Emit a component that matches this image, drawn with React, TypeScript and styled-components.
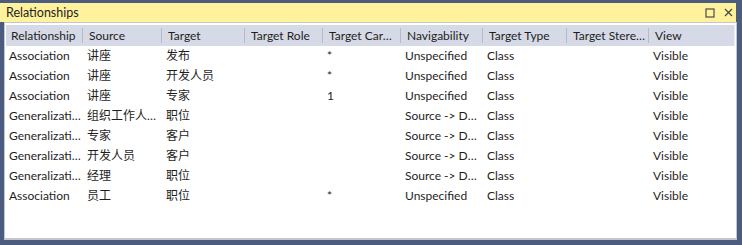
import styled, { createGlobalStyle } from "styled-components";

const GlobalStyle = createGlobalStyle`
  html, body {
    margin: 0;
    padding: 0;
    background: #4b5c7f;
  }
  body {
    font-family: Lato, "Noto Sans CJK SC", sans-serif;
    font-size: 12px;
    color: #1e1e1e;
  }
`;

const COLS = "77px 79px 83px 78px 78px 82px 84px 82px 1fr";

const headers = [
  "Relationship",
  "Source",
  "Target",
  "Target Role",
  "Target Cardinality",
  "Navigability",
  "Target Type",
  "Target Stereotype",
  "View",
];

const rows: string[][] = [
  ["Association", "讲座", "发布", "", "*", "Unspecified", "Class", "", "Visible"],
  ["Association", "讲座", "开发人员", "", "*", "Unspecified", "Class", "", "Visible"],
  ["Association", "讲座", "专家", "", "1", "Unspecified", "Class", "", "Visible"],
  ["Generalization", "组织工作人员", "职位", "", "", "Source -> Destination", "Class", "", "Visible"],
  ["Generalization", "专家", "客户", "", "", "Source -> Destination", "Class", "", "Visible"],
  ["Generalization", "开发人员", "客户", "", "", "Source -> Destination", "Class", "", "Visible"],
  ["Generalization", "经理", "职位", "", "", "Source -> Destination", "Class", "", "Visible"],
  ["Association", "员工", "职位", "", "*", "Unspecified", "Class", "", "Visible"],
];

const App = () => {
  return (
    <>
      <GlobalStyle />
      <Window>
        <TitleBar>
          <Title>Relationships</Title>
          <TitleButtons>
            <svg width="10" height="10" viewBox="0 0 10 10">
              <rect x="1" y="1" width="8" height="8" fill="none" stroke="#4a4a4a" strokeWidth="1.2" />
            </svg>
            <svg width="9" height="9" viewBox="0 0 9 9">
              <path d="M1 1 L8 8 M8 1 L1 8" stroke="#4a4a4a" strokeWidth="1.3" />
            </svg>
          </TitleButtons>
        </TitleBar>
        <Panel>
          <HeaderRow>
            {headers.map((h) => (
              <HeadCell key={h}>{h}</HeadCell>
            ))}
          </HeaderRow>
          {rows.map((r, i) => (
            <Row key={i}>
              {r.map((c, j) => (
                <Cell key={j}>{c}</Cell>
              ))}
            </Row>
          ))}
        </Panel>
      </Window>
    </>
  );
};

const Window = styled.div`
  width: 742px;
  height: 245px;
  box-sizing: border-box;
  padding-top: 3px;
  display: flex;
  flex-direction: column;
`;

const TitleBar = styled.div`
  height: 19px;
  margin-right: 6px;
  background: #fff29d;
  display: flex;
  align-items: center;
  justify-content: space-between;
  padding: 0 6px;
`;

const Title = styled.span`
  font-size: 12.5px;
  line-height: 19px;
  color: #1e1e1e;
`;

const TitleButtons = styled.div`
  display: flex;
  align-items: center;
  gap: 9px;
  margin-right: -3px;

  svg {
    display: block;
  }
`;

const Panel = styled.div`
  height: 218px;
  margin: 0 5px 0 4px;
  border: 1px solid #c3c6cc;
  border-bottom-width: 2px;
  background: #fff;
  padding: 2px 1px 0 1px;
  box-sizing: border-box;
`;

const Row = styled.div`
  display: grid;
  grid-template-columns: ${COLS};
  height: 20px;
  align-items: center;
`;

const HeaderRow = styled(Row)`
  height: 21px;
  background: #d6d9e6;
  border-right: 1px solid #eceef3;
`;

const HeadCell = styled.div`
  padding: 0 3px 0 6px;
  white-space: nowrap;
  overflow: hidden;
  text-overflow: ellipsis;
  line-height: 21px;
  background: linear-gradient(#b6bac8, #b6bac8) right center / 1px 15px no-repeat;

  &:first-child {
    padding-left: 5px;
  }
  &:last-child {
    background: none;
  }
`;

const Cell = styled.div`
  padding: 0 4px;
  white-space: nowrap;
  overflow: hidden;
  text-overflow: ellipsis;
  line-height: 20px;

  &:first-child {
    padding: 0 2px 0 3px;
  }
`;

export default App;
